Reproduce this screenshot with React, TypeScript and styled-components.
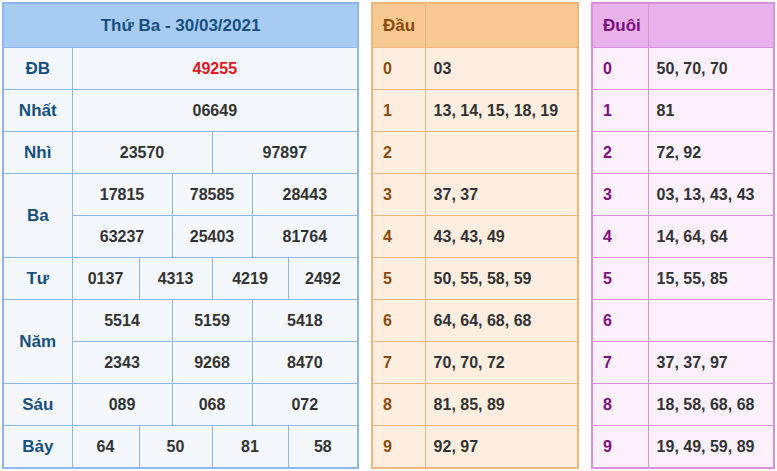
import * as React from 'react';
import styled, { createGlobalStyle } from 'styled-components';

const Global = createGlobalStyle`
  body { margin: 0; background: #fff; font-family: "Liberation Sans", Arial, sans-serif; }
`;

const Page = styled.div`
  display: flex;
  align-items: flex-start;
  padding: 2px 0 0 2px;
  gap: 12px;
`;

interface Theme { border: string; head: string; body: string; key: string; }
const blue: Theme = { border: '#8db6ea', head: '#a8cbf4', body: '#f4f8fd', key: '#17507e' };
const orange: Theme = { border: '#eeb67c', head: '#f9c993', body: '#fdeee0', key: '#8b4a0c' };
const purple: Theme = { border: '#d892dd', head: '#e8b2ea', body: '#fcf0fc', key: '#7d0f80' };

const Table = styled.table<{ $t: Theme; $w: number }>`
  width: ${(p) => p.$w}px;
  border-collapse: collapse;
  table-layout: fixed;
  border: 2px solid ${(p) => p.$t.border};
  font-size: 16px;
  font-weight: bold;
  td, th {
    border: 1px solid ${(p) => p.$t.border};
    height: 41px;
    padding: 0;
  }
  th {
    height: 43px;
    background: ${(p) => p.$t.head};
    color: ${(p) => p.$t.key};
    font-size: 17px;
  }
  td { background: ${(p) => p.$t.body}; color: #333; }
`;

const Label = styled.td<{ $c: string }>`
  && { color: ${(p) => p.$c}; font-size: 17px; text-align: center; }
`;

const Cell = styled.td<{ $align?: string; $red?: boolean }>`
  text-align: ${(p) => p.$align || 'center'};
  && { color: ${(p) => (p.$red ? '#e3161b' : '#333')}; }
`;

const Key = styled.td<{ $c: string }>`
  && { color: ${(p) => p.$c}; padding-left: 10px; }
`;

const HeadKey = styled.th`
  text-align: left;
  padding-left: 10px !important;
`;

const three = (a: string[]) => (
  <>
    <Cell colSpan={2}>{a[0]}</Cell>
    <Cell colSpan={2}>{a[1]}</Cell>
    <Cell colSpan={2}>{a[2]}</Cell>
  </>
);
const four = (a: string[]) => (
  <>
    <Cell>{a[0]}</Cell>
    <Cell colSpan={2}>{a[1]}</Cell>
    <Cell colSpan={2}>{a[2]}</Cell>
    <Cell>{a[3]}</Cell>
  </>
);

const dau = ['03', '13, 14, 15, 18, 19', '', '37, 37', '43, 43, 49', '50, 55, 58, 59', '64, 64, 68, 68', '70, 70, 72', '81, 85, 89', '92, 97'];
const duoi = ['50, 70, 70', '81', '72, 92', '03, 13, 43, 43', '14, 64, 64', '15, 55, 85', '', '37, 37, 97', '18, 58, 68, 68', '19, 49, 59, 89'];

const Side = ({ t, title, data, w, kw }: { t: Theme; title: string; data: string[]; w: number; kw: number }) => (
  <Table $t={t} $w={w}>
    <colgroup>
      <col style={{ width: kw }} />
      <col />
    </colgroup>
    <thead>
      <tr>
        <HeadKey>{title}</HeadKey>
        <th />
      </tr>
    </thead>
    <tbody>
      {data.map((d, i) => (
        <tr key={i}>
          <Key $c={t.key}>{i}</Key>
          <Cell $align="left" style={{ paddingLeft: 8 }}>{d}</Cell>
        </tr>
      ))}
    </tbody>
  </Table>
);

export default function App() {
  const L = blue.key;
  return (
    <Page>
      <Global />
      <Table $t={blue} $w={356}>
        <colgroup>
          {[69, 67, 33, 40, 40, 36, 70].map((w, i) => (
            <col key={i} style={{ width: w }} />
          ))}
        </colgroup>
        <thead>
          <tr>
            <th colSpan={7}>Thứ Ba - 30/03/2021</th>
          </tr>
        </thead>
        <tbody>
          <tr><Label $c={L}>ĐB</Label><Cell colSpan={6} $red>49255</Cell></tr>
          <tr><Label $c={L}>Nhất</Label><Cell colSpan={6}>06649</Cell></tr>
          <tr><Label $c={L}>Nhì</Label><Cell colSpan={3}>23570</Cell><Cell colSpan={3}>97897</Cell></tr>
          <tr><Label $c={L} rowSpan={2}>Ba</Label>{three(['17815', '78585', '28443'])}</tr>
          <tr>{three(['63237', '25403', '81764'])}</tr>
          <tr><Label $c={L}>Tư</Label>{four(['0137', '4313', '4219', '2492'])}</tr>
          <tr><Label $c={L} rowSpan={2}>Năm</Label>{three(['5514', '5159', '5418'])}</tr>
          <tr>{three(['2343', '9268', '8470'])}</tr>
          <tr><Label $c={L}>Sáu</Label>{three(['089', '068', '072'])}</tr>
          <tr><Label $c={L}>Bảy</Label>{four(['64', '50', '81', '58'])}</tr>
        </tbody>
      </Table>
      <Side t={orange} title="Đầu" data={dau} w={208} kw={53} />
      <Side t={purple} title="Đuôi" data={duoi} w={184} kw={56} />
    </Page>
  );
}
